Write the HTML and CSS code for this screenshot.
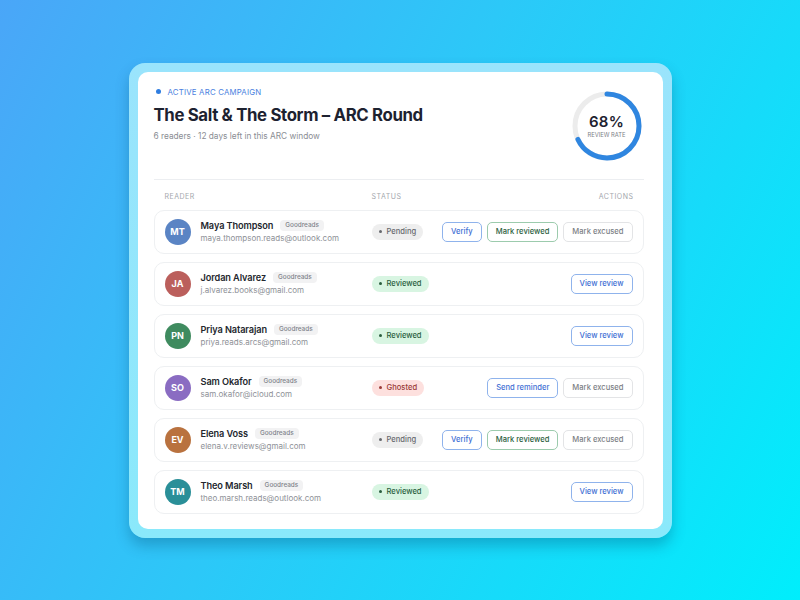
FILE: index.html
```html
<!DOCTYPE html>
<html lang="en">
<head>
<meta charset="utf-8">
<title>ARC Campaign</title>
<link rel="stylesheet" href="styles.css">
</head>
<body>
<div class="frame">
  <div class="card">
    <header class="head">
      <div class="head-text">
        <div class="eyebrow"><span class="eyebrow-dot"></span>ACTIVE ARC CAMPAIGN</div>
        <h1 class="title">The Salt &amp; The Storm – ARC Round</h1>
        <p class="subtitle">6 readers · 12 days left in this ARC window</p>
      </div>
      <div class="ring">
        <svg width="70" height="70" viewBox="0 0 70 70">
          <circle cx="35" cy="35" r="32" fill="none" stroke="#ececec" stroke-width="5"/>
          <circle cx="35" cy="35" r="32" fill="none" stroke="#2f86e0" stroke-width="5" stroke-linecap="round" stroke-dasharray="136.7 201.1" transform="rotate(-90 35 35)"/>
        </svg>
        <div class="ring-label">
          <span class="ring-value">68%</span>
          <span class="ring-caption">REVIEW RATE</span>
        </div>
      </div>
    </header>

    <div class="thead">
      <span>READER</span>
      <span>STATUS</span>
      <span class="th-actions">ACTIONS</span>
    </div>

    <div class="row">
      <div class="reader">
        <span class="avatar av-blue">MT</span>
        <div class="who">
          <div class="name">Maya Thompson <span class="src">Goodreads</span></div>
          <div class="email">maya.thompson.reads@outlook.com</div>
        </div>
      </div>
      <div class="status"><span class="pill pending">Pending</span></div>
      <div class="actions">
        <button class="btn blue">Verify</button>
        <button class="btn green">Mark reviewed</button>
        <button class="btn gray">Mark excused</button>
      </div>
    </div>

    <div class="row">
      <div class="reader">
        <span class="avatar av-red">JA</span>
        <div class="who">
          <div class="name">Jordan Alvarez <span class="src">Goodreads</span></div>
          <div class="email">j.alvarez.books@gmail.com</div>
        </div>
      </div>
      <div class="status"><span class="pill reviewed">Reviewed</span></div>
      <div class="actions">
        <button class="btn blue">View review</button>
      </div>
    </div>

    <div class="row">
      <div class="reader">
        <span class="avatar av-green">PN</span>
        <div class="who">
          <div class="name">Priya Natarajan <span class="src">Goodreads</span></div>
          <div class="email">priya.reads.arcs@gmail.com</div>
        </div>
      </div>
      <div class="status"><span class="pill reviewed">Reviewed</span></div>
      <div class="actions">
        <button class="btn blue">View review</button>
      </div>
    </div>

    <div class="row">
      <div class="reader">
        <span class="avatar av-purple">SO</span>
        <div class="who">
          <div class="name">Sam Okafor <span class="src">Goodreads</span></div>
          <div class="email">sam.okafor@icloud.com</div>
        </div>
      </div>
      <div class="status"><span class="pill ghosted">Ghosted</span></div>
      <div class="actions">
        <button class="btn blue">Send reminder</button>
        <button class="btn gray">Mark excused</button>
      </div>
    </div>

    <div class="row">
      <div class="reader">
        <span class="avatar av-brown">EV</span>
        <div class="who">
          <div class="name">Elena Voss <span class="src">Goodreads</span></div>
          <div class="email">elena.v.reviews@gmail.com</div>
        </div>
      </div>
      <div class="status"><span class="pill pending">Pending</span></div>
      <div class="actions">
        <button class="btn blue">Verify</button>
        <button class="btn green">Mark reviewed</button>
        <button class="btn gray">Mark excused</button>
      </div>
    </div>

    <div class="row">
      <div class="reader">
        <span class="avatar av-teal">TM</span>
        <div class="who">
          <div class="name">Theo Marsh <span class="src">Goodreads</span></div>
          <div class="email">theo.marsh.reads@outlook.com</div>
        </div>
      </div>
      <div class="status"><span class="pill reviewed">Reviewed</span></div>
      <div class="actions">
        <button class="btn blue">View review</button>
      </div>
    </div>
  </div>
</div>
</body>
</html>
```

FILE: styles.css
```css
* { box-sizing: border-box; }

html, body {
  margin: 0;
  height: 100%;
}

body {
  display: flex;
  align-items: center;
  justify-content: center;
  background: linear-gradient(118deg, #4aa6f8 0%, #2cc8f8 45%, #00eefc 100%);
  font-family: "Inter", "Liberation Sans", sans-serif;
  color: #1f2430;
}

.frame {
  width: 543px;
  height: 475px;
  padding: 9px;
  border-radius: 16px;
  background: linear-gradient(180deg, #9ae4fc 0%, #8ae9fb 100%);
  box-shadow: 0 8px 14px rgba(0, 70, 110, 0.3);
}

.card {
  height: 100%;
  background: #ffffff;
  border-radius: 10px;
  padding: 14px 19px 15px 16px;
}

/* header */
.head {
  display: flex;
  justify-content: space-between;
  align-items: flex-start;
  padding-bottom: 18px;
  border-bottom: 1px solid #eceef1;
}

.eyebrow {
  display: flex;
  align-items: center;
  height: 12px;
  font-size: 7.8px;
  letter-spacing: 0.2px;
  color: #4a7fe0;
}

.eyebrow-dot {
  width: 5px;
  height: 5px;
  border-radius: 50%;
  background: #2f7de0;
  margin: 0 7px 0 2px;
}

.title {
  margin: 6px 0 0;
  font-size: 16.8px;
  line-height: 22px;
  font-weight: 700;
  letter-spacing: -0.35px;
  color: #1d2230;
}

.subtitle {
  margin: 3px 0 0;
  font-size: 8.3px;
  line-height: 14px;
  color: #8a8d93;
}

.ring {
  position: relative;
  width: 70px;
  height: 70px;
  margin-top: 5px;
  margin-right: 2px;
}

.ring svg { display: block; }

.ring-label {
  position: absolute;
  inset: 0;
  display: flex;
  flex-direction: column;
  align-items: center;
  justify-content: center;
}

.ring-value {
  font-size: 15px;
  font-weight: 600;
  line-height: 17px;
  letter-spacing: 0.3px;
  color: #1d2230;
}

.ring-caption {
  font-size: 5.8px;
  color: #7d8087;
  margin-top: 1px;
}

/* table */
.thead {
  display: grid;
  grid-template-columns: 207px 1fr auto;
  padding: 12px 10px 8px 11px;
  font-size: 7px;
  line-height: 10px;
  letter-spacing: 0.5px;
  color: #a4a7ad;
}

.row {
  display: grid;
  grid-template-columns: 207px 1fr auto;
  align-items: center;
  height: 44px;
  margin-bottom: 8px;
  padding: 0 10px;
  border: 1px solid #eef0f2;
  border-radius: 10px;
}

.reader {
  display: flex;
  align-items: center;
}

.avatar {
  flex: none;
  width: 26px;
  height: 26px;
  border-radius: 50%;
  margin-right: 10px;
  display: flex;
  align-items: center;
  justify-content: center;
  color: #fff;
  font-size: 9px;
  font-weight: 700;
}

.av-blue { background: #5a84c4; }
.av-red { background: #bb5f5c; }
.av-green { background: #3f8b5f; }
.av-purple { background: #8a6cc2; }
.av-brown { background: #b9723f; }
.av-teal { background: #2a8f98; }

.name {
  display: flex;
  align-items: center;
  font-size: 9.2px;
  line-height: 12px;
  font-weight: 600;
  letter-spacing: -0.1px;
  color: #24272e;
}

.src {
  margin-left: 7px;
  padding: 1px 5px;
  border-radius: 4px;
  background: #f2f2f3;
  font-size: 6.4px;
  line-height: 9px;
  font-weight: 500;
  letter-spacing: 0;
  color: #80838a;
}

.email {
  font-size: 8px;
  line-height: 12px;
  color: #8e9197;
}

.status {
  display: flex;
  align-items: center;
}

.pill {
  display: inline-flex;
  align-items: center;
  height: 16px;
  padding: 0 7px;
  border-radius: 8px;
  font-size: 7.6px;
  font-weight: 500;
}

.pill::before {
  content: "";
  width: 3px;
  height: 3px;
  border-radius: 50%;
  background: currentColor;
  margin-right: 5px;
}

.pending { background: #eeeeee; color: #66686d; }
.reviewed { background: #d8f5e2; color: #2a5e3e; }
.ghosted { background: #fde0de; color: #9a3a36; }

.actions {
  display: flex;
  gap: 5px;
}

.btn {
  height: 20px;
  padding: 0 8px;
  border-radius: 5px;
  background: #fff;
  font-family: inherit;
  font-size: 7.6px;
  font-weight: 500;
  cursor: pointer;
}

.btn.blue { border: 1px solid #8fb3ec; color: #3f6fd4; }
.btn.green { border: 1px solid #9ccbad; color: #2c5e40; }
.btn.gray { border: 1px solid #e3e4e6; color: #7b7e84; }
```
